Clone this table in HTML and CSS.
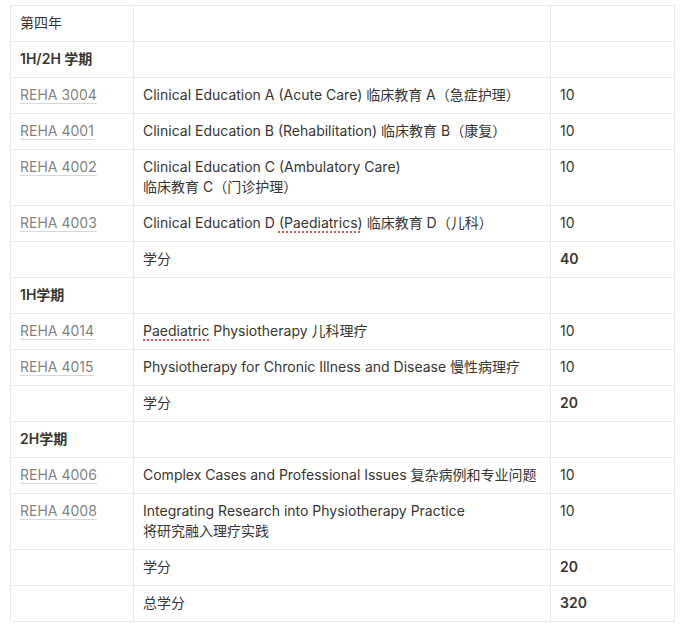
FILE: index.html
```html
<!DOCTYPE html>
<html lang="zh">
<head>
<meta charset="utf-8">
<link rel="stylesheet" href="styles.css">
</head>
<body>
<table class="grid">
  <colgroup><col class="c1"><col class="c2"><col class="c3"></colgroup>
  <tr><td>第四年</td><td></td><td></td></tr>
  <tr><td class="b">1H/2H 学期</td><td></td><td></td></tr>
  <tr><td><span class="code">REHA 3004</span></td><td>Clinical Education A (Acute Care) 临床教育 A（急症护理）</td><td>10</td></tr>
  <tr><td><span class="code">REHA 4001</span></td><td>Clinical Education B (Rehabilitation) 临床教育 B（康复）</td><td>10</td></tr>
  <tr><td><span class="code">REHA 4002</span></td><td>Clinical Education C (Ambulatory Care)<br>临床教育 C（门诊护理）</td><td>10</td></tr>
  <tr><td><span class="code">REHA 4003</span></td><td>Clinical Education D <span class="spell">(Paediatrics)</span> 临床教育 D（儿科）</td><td>10</td></tr>
  <tr><td></td><td>学分</td><td class="b">40</td></tr>
  <tr><td class="b">1H学期</td><td></td><td></td></tr>
  <tr><td><span class="code">REHA 4014</span></td><td><span class="spell">Paediatric</span> Physiotherapy 儿科理疗</td><td>10</td></tr>
  <tr><td><span class="code">REHA 4015</span></td><td>Physiotherapy for Chronic Illness and Disease 慢性病理疗</td><td>10</td></tr>
  <tr><td></td><td>学分</td><td class="b">20</td></tr>
  <tr><td class="b">2H学期</td><td></td><td></td></tr>
  <tr><td><span class="code">REHA 4006</span></td><td>Complex Cases and Professional Issues 复杂病例和专业问题</td><td>10</td></tr>
  <tr><td><span class="code">REHA 4008</span></td><td>Integrating Research into Physiotherapy Practice<br>将研究融入理疗实践</td><td>10</td></tr>
  <tr><td></td><td>学分</td><td class="b">20</td></tr>
  <tr><td></td><td>总学分</td><td class="b">320</td></tr>
</table>
</body>
</html>
```
FILE: styles.css
```css
html, body {
  margin: 0;
  background: #ffffff;
}
body {
  padding: 5px 0 0 10px;
  font-family: Inter, "Noto Sans CJK SC", sans-serif;
  font-size: 14px;
  line-height: 20px;
  color: rgb(55, 53, 47);
  text-spacing-trim: space-all;
}
.grid {
  border-collapse: collapse;
  table-layout: fixed;
  width: 664px;
}
.c1 { width: 123px; }
.c2 { width: 417px; }
.c3 { width: 124px; }
.grid td {
  border: 1px solid #ebebea;
  padding: 7px 9px 8px;
  vertical-align: top;
  height: 20px;
  white-space: nowrap;
}
.b { font-weight: 600; }
.code {
  color: rgba(55, 53, 47, 0.65);
  border-bottom: 1px solid rgba(55, 53, 47, 0.2);
}
.spell {
  text-decoration: underline dotted #e0574f;
  text-decoration-thickness: 1.5px;
  text-underline-offset: 3px;
}
```
